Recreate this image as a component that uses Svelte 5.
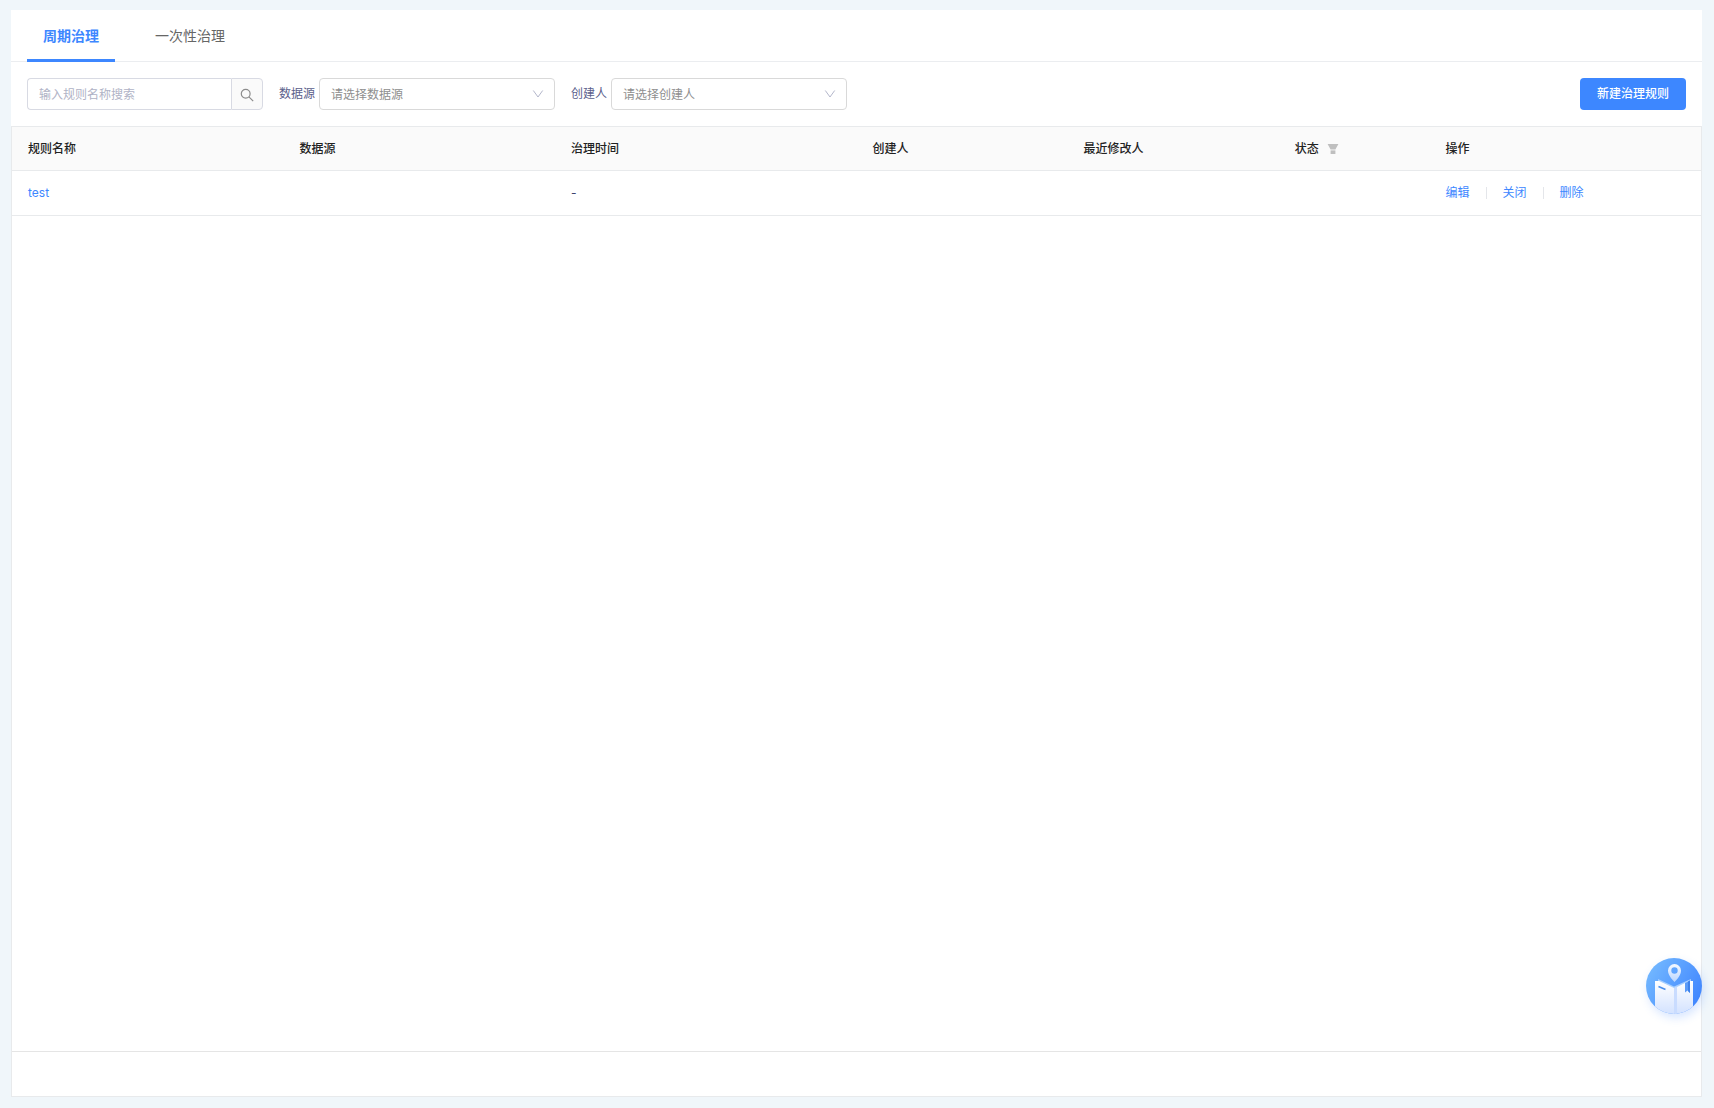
<script lang="ts">
  type Rule = { id: number; name: string; source: string; time: string; creator: string; modifier: string; status: string };

  const tabs = ['周期治理', '一次性治理'];
  const actions = ['编辑', '关闭', '删除'];
  const filters = [
    { id: 'source', label: '数据源', placeholder: '请选择数据源' },
    { id: 'creator', label: '创建人', placeholder: '请选择创建人' },
  ];

  let activeTab = $state(0);
  let keyword = $state('');
  let rules: Rule[] = $state([
    { id: 1, name: 'test', source: '', time: '-', creator: '', modifier: '', status: '' },
  ]);
</script>

<main class="page">
  <div class="tabs" role="tablist">
    {#each tabs as tab, i}
      <button class="tab" class:active={activeTab === i} role="tab" aria-selected={activeTab === i} onclick={() => (activeTab = i)}>
        {tab}
      </button>
    {/each}
  </div>

  <div class="toolbar">
    <form class="search" onsubmit={(e) => e.preventDefault()}>
      <input type="text" placeholder="输入规则名称搜索" aria-label="输入规则名称搜索" bind:value={keyword} />
      <button type="submit" aria-label="搜索">
        <svg width="14" height="14" viewBox="0 0 14 14" fill="none" stroke="#8c8c8c" stroke-width="1.2">
          <circle cx="5.7" cy="5.7" r="4.4" />
          <path d="M8.9 8.9L13.2 13.2" />
        </svg>
      </button>
    </form>

    {#each filters as filter}
      <div class="filter">
        <label for={filter.id}>{filter.label}</label>
        <div class="select">
          <select id={filter.id}>
            <option value="">{filter.placeholder}</option>
          </select>
          <svg class="arrow" width="12" height="12" viewBox="0 0 12 12" fill="none" stroke="#b4b7cb" stroke-width="1">
            <path d="M1.3 2.5L6 9L10.7 2.5" />
          </svg>
        </div>
      </div>
    {/each}

    <button class="create">新建治理规则</button>
  </div>

  <div class="table-wrap">
    <table>
      <colgroup>
        <col class="col-l" />
        <col class="col-l" />
        <col class="col-xl" />
        <col class="col-m" />
        <col class="col-m" />
        <col class="col-s" />
        <col class="col-l" />
      </colgroup>
      <thead>
        <tr>
          <th>规则名称</th>
          <th>数据源</th>
          <th>治理时间</th>
          <th>创建人</th>
          <th>最近修改人</th>
          <th>
            <span class="status">
              状态
              <button class="funnel" aria-label="筛选状态">
                <svg width="12" height="12" viewBox="0 0 12 12" fill="#bfbfbf">
                  <path d="M0.6 1H11.4L8.4 6.4H3.6Z" />
                  <path d="M3.6 7.4H8.4V11H3.6Z" />
                </svg>
              </button>
            </span>
          </th>
          <th>操作</th>
        </tr>
      </thead>
      <tbody>
        {#each rules as rule (rule.id)}
          <tr>
            <td><a href="#rule">{rule.name}</a></td>
            <td>{rule.source}</td>
            <td>{rule.time}</td>
            <td>{rule.creator}</td>
            <td>{rule.modifier}</td>
            <td>{rule.status}</td>
            <td>
              <div class="actions">
                {#each actions as action, i}
                  {#if i > 0}<span class="divider"></span>{/if}
                  <a href="#action">{action}</a>
                {/each}
              </div>
            </td>
          </tr>
        {/each}
      </tbody>
    </table>
    <div class="footer"></div>
  </div>
</main>

<button class="guide" aria-label="帮助">
  <svg width="56" height="56" viewBox="0 0 56 56">
    <defs>
      <linearGradient id="disc" x1="0" y1="0.2" x2="1" y2="0.8">
        <stop offset="0" stop-color="#74b9ff" />
        <stop offset="1" stop-color="#3d83ff" />
      </linearGradient>
      <linearGradient id="leaf" x1="0" y1="0" x2="0" y2="1">
        <stop offset="0" stop-color="#fff" />
        <stop offset="1" stop-color="#d3e2ff" />
      </linearGradient>
      <linearGradient id="pin" x1="0" y1="0" x2="0" y2="1">
        <stop offset="0" stop-color="#f5f9ff" />
        <stop offset="1" stop-color="#b9d5ff" />
      </linearGradient>
      <clipPath id="round"><circle cx="28" cy="28" r="28" /></clipPath>
    </defs>
    <g clip-path="url(#round)">
      <rect width="56" height="56" fill="url(#disc)" />
      <path d="M12 21L28 28.5V34L12 26Z" fill="#a9d0ff" />
      <path d="M45 21L28 28.5V34L45 26Z" fill="#a9d0ff" />
      <path d="M9 23H13L28 30V56H9Z" fill="url(#leaf)" />
      <path d="M47 23H43L29 30V56H47Z" fill="url(#leaf)" />
      <path d="M28 30L31 28.5V56H28Z" fill="#c9dcff" />
      <path d="M12.5 28.5L19.5 31.5" stroke="#4b8fec" stroke-width="1.6" />
      <path d="M39 25L44 22.5V35L41.5 32.5L39 34.5Z" fill="#5b9bf8" />
      <path d="M42 23.5L44 22.5V35L42 33Z" fill="#3f82ea" />
      <path fill-rule="evenodd" fill="url(#pin)" d="M28.5 6A6.5 6.5 0 0 1 35 12.5C35 17 31.5 21 28.5 24C25.5 21 22 17 22 12.5A6.5 6.5 0 0 1 28.5 6ZM28.5 9.3A3.2 3.2 0 1 0 28.5 15.7A3.2 3.2 0 1 0 28.5 9.3Z" />
    </g>
  </svg>
</button>

<style>
  :global(body) {
    background: #f0f6fa;
    color: #3d446e;
    font-family: Inter, "Noto Sans CJK SC", sans-serif;
    font-size: 12px;
    line-height: 20px;
  }

  .page {
    display: flex;
    flex-direction: column;
    box-sizing: border-box;
    min-height: 100vh;
    padding: 10px 12px 11px 11px;
  }

  button,
  input,
  select {
    font: inherit;
    margin: 0;
    box-sizing: border-box;
  }

  button {
    cursor: pointer;
  }

  a {
    color: #3d87ff;
    text-decoration: none;
  }

  .tabs {
    display: flex;
    gap: 24px;
    padding: 0 16px;
    background: #fff;
    box-shadow: inset 0 -1px #ebedf0;
  }

  .tab {
    height: 52px;
    padding: 2px 16px 0;
    border: 0;
    border-bottom: 3px solid transparent;
    background: none;
    color: #666;
    font-size: 14px;
  }

  .tab.active {
    color: #3d87ff;
    font-weight: 700;
    border-color: #3d87ff;
  }

  .toolbar {
    display: flex;
    align-items: center;
    gap: 16px;
    padding: 16px;
    background: #fff;
  }

  .search {
    display: flex;
    width: 236px;
  }

  .search input {
    flex: 1;
    min-width: 0;
    height: 32px;
    padding: 0 11px;
    border: 1px solid #d8dae3;
    border-right: 0;
    border-radius: 4px 0 0 4px;
    color: #3d446e;
    outline: none;
  }

  .search input::placeholder {
    color: #b0b3c6;
    opacity: 1;
  }

  .search button {
    display: flex;
    align-items: center;
    justify-content: center;
    width: 32px;
    height: 32px;
    padding: 2px 0 0;
    border: 1px solid #d8dae3;
    border-radius: 0 4px 4px 0;
    background: #fafafa;
  }

  .filter {
    display: flex;
    align-items: center;
    gap: 4px;
  }

  .filter label {
    color: #5b608b;
  }

  .select {
    position: relative;
  }

  .select select {
    display: block;
    appearance: none;
    width: 236px;
    height: 32px;
    padding: 1px 11px 0;
    border: 1px solid #d9d9d9;
    border-radius: 4px;
    background: #fff;
    color: #8e8e8e;
  }

  .arrow {
    position: absolute;
    top: 10px;
    right: 11px;
    pointer-events: none;
  }

  .create {
    height: 32px;
    margin-left: auto;
    padding: 0 17px;
    border: 0;
    border-radius: 4px;
    background: #3d87ff;
    color: #fff;
    font-weight: 500;
  }

  .table-wrap {
    flex: 1;
    display: flex;
    flex-direction: column;
    border: 1px solid #e8eaec;
    background: #fff;
  }

  table {
    width: 100%;
    table-layout: fixed;
    border-collapse: separate;
    border-spacing: 0;
  }

  .col-s { width: 100px; }
  .col-m { width: 140px; }
  .col-l { width: 180px; }
  .col-xl { width: 200px; }

  th,
  td {
    box-sizing: border-box;
    height: 45px;
    padding: 0 16px;
    border-bottom: 1px solid #e8eaec;
    text-align: left;
  }

  th {
    height: 44px;
    background: #fafafa;
    color: #222;
    font-weight: 500;
  }

  .status {
    display: flex;
    align-items: center;
    gap: 8px;
  }

  .funnel {
    display: flex;
    padding: 0;
    border: 0;
    background: none;
  }

  .actions {
    display: flex;
    align-items: center;
    gap: 16px;
  }

  .divider {
    width: 1px;
    height: 12px;
    background: #e4e6ea;
  }

  .footer {
    height: 44px;
    margin-top: auto;
    border-top: 1px solid #e5e5e5;
  }

  .guide {
    position: fixed;
    right: 12px;
    bottom: 94px;
    width: 56px;
    height: 56px;
    padding: 0;
    border: 0;
    border-radius: 50%;
    background: none;
    box-shadow: 2px 4px 10px rgba(61, 131, 255, 0.2);
  }

  .guide svg {
    display: block;
  }
</style>
